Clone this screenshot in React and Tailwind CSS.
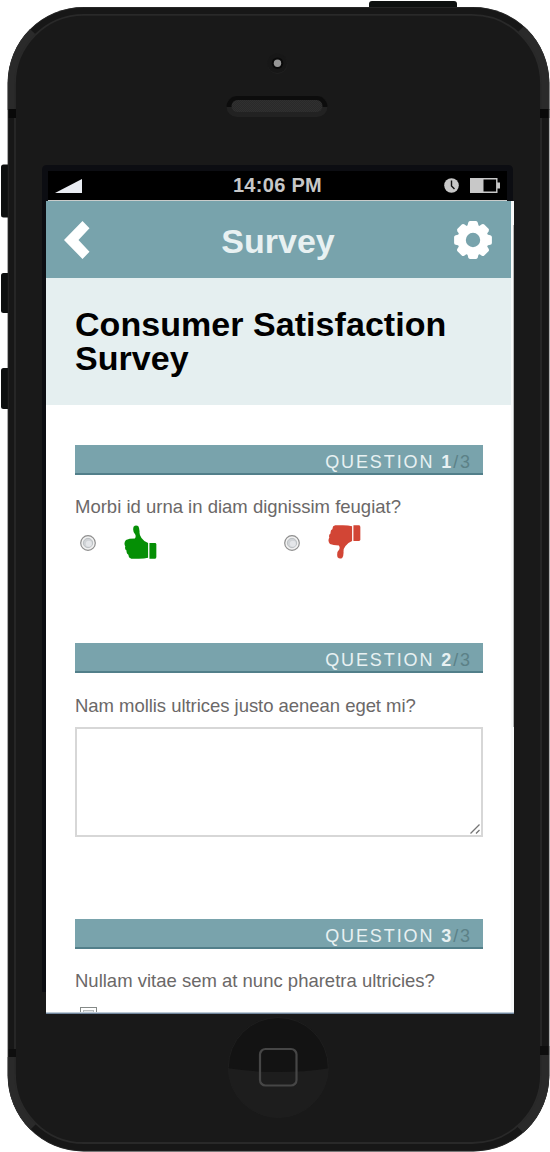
import React from "react";

function Device() {
  return (
    <svg className="absolute inset-0 h-full w-full" viewBox="0 0 550 1152" aria-hidden="true">
      <defs>
        <clipPath id="body">
          <rect x="7.7" y="7" width="541.6" height="1144.5" rx="76" />
        </clipPath>
        <clipPath id="home">
          <circle cx="278.300" cy="1067.500" r="50" />
        </clipPath>
        <pattern id="mesh" width="2" height="2" patternUnits="userSpaceOnUse">
          <rect width="2" height="2" fill="#292929" />
          <rect width="1" height="1" fill="#303030" />
          <rect x="1" y="1" width="1" height="1" fill="#303030" />
        </pattern>
      </defs>
      <rect x="369" y="1" width="88" height="14" rx="3" fill="#0e1110" />
      <rect x="1" y="164.500" width="14" height="53" rx="2.500" fill="#0d0f0f" />
      <rect x="1" y="273" width="14" height="40" rx="2.500" fill="#0d0f0f" />
      <rect x="1" y="368" width="14" height="41" rx="2.500" fill="#0d0f0f" />
      <g clipPath="url(#body)">
        <rect width="550" height="1152" fill="#171717" />
        <path d="M0 0L60 58V110H0zM550 0L488 62V110H550zM0 1057H60V1100L0 1160zM550 1055H488V1097L550 1160z" fill="#2a2a2a" />
        <rect x="15" y="14.800" width="526" height="1128.200" rx="69" fill="#191919" stroke="#292929" strokeWidth="1.800" />
        <path d="M8 109h8v9h-8zM540 109h10v9h-10z" fill="#090909" />
        <path d="M8 1049h8v8h-8zM540 1046h10v9h-10z" fill="#0e0e0e" />
        <rect x="8.100" y="7.400" width="540.800" height="1143.700" rx="75.600" fill="none" stroke="#303030" strokeWidth=".7" />
      </g>
      <circle cx="277.500" cy="64" r="10" fill="#202020" />
      <circle cx="277.200" cy="63.200" r="9.800" fill="#171717" />
      <circle cx="277.500" cy="63.200" r="5.800" fill="#0a0a0a" />
      <circle cx="277.500" cy="63.200" r="3.700" fill="#969696" />
      <rect x="226.500" y="96" width="101" height="21" rx="10.500" fill="#222" />
      <path d="M226.500 107a10.500 11 0 0 1 10.500-11h80a10.500 11 0 0 1 10.500 11z" fill="#0c0c0c" />
      <rect x="231.500" y="100" width="91" height="12" rx="6" fill="url(#mesh)" />
      <path d="M42 992V170q0-5 5-5H508q5 0 5 5V202H46V992z" fill="#0c0d12" />
      <g clipPath="url(#home)">
        <rect x="226" y="1015" width="104" height="105" fill="#1d1d1d" />
        <path d="M226 1015H330V1068Q278 1076 226 1068z" fill="#131313" />
      </g>
      <circle cx="278.300" cy="1067.500" r="50" fill="none" stroke="#1e1e1e" />
      <rect x="260" y="1049" width="36.500" height="36.500" rx="5.500" fill="none" stroke="#464646" strokeWidth="2.200" />
    </svg>
  );
}

function Gear() {
  return (
    <svg className="h-[38px] w-[38px]" viewBox="-19 -19 38 38" fill="white">
      <circle r="11.400" fill="none" stroke="white" strokeWidth="8.400" />
      {[0, 45, 90, 135, 180, 225, 270, 315].map((a) => (
        <path key={a} transform={`rotate(${a})`} d="M-5.600-14L-4.800-17.300Q-4.400-18.900-3-18.900H3Q4.400-18.900 4.800-17.300L5.600-14z" />
      ))}
    </svg>
  );
}

function Thumb({ className }) {
  return (
    <svg className={className} viewBox="0 0 100 100" fill="currentColor" preserveAspectRatio="none">
      <path d="M29 5Q35-1 43 3Q48 11 47 22Q47 31 53 38Q61 49 73 53V96Q62 99 45 99H22Q12 97 14 88Q6 84 8 76Q1 71 4 63Q-2 52 6 44Q15 40 33 40Q37 34 34 28Q25 20 29 5z" />
      <path d="M77 53H94Q98 53 98 57V94Q98 99 94 99H77z" />
    </svg>
  );
}

function Radio() {
  return (
    <svg className="mt-px h-4 w-4" viewBox="0 0 16 16">
      <circle cx="8" cy="8" r="7.300" fill="#f2f2f2" stroke="#8e8e8e" strokeWidth="1.200" />
      <circle cx="8" cy="8" r="4.700" fill="#d0d3d6" stroke="#b3b7bb" strokeWidth=".8" />
      <circle cx="8.800" cy="8.800" r="3" fill="#e4e6e9" />
    </svg>
  );
}

function QuestionBar({ number }) {
  return (
    <div className="flex h-[30px] items-center justify-end border-b-2 border-[#527f8a] bg-[#79a3ac] pr-[11px] pt-[6px] text-[18px] leading-none tracking-[1.9px] text-[#e8f1f2]">
      <span className="whitespace-pre">QUESTION </span>
      <span className="font-bold">{number}</span>
      <span className="text-[#5c8187]">/3</span>
    </div>
  );
}

export default function App() {
  return (
    <main
      className="relative h-[1152px] w-[550px] overflow-hidden bg-white pl-[46px] pt-[171px]"
      style={{ fontFamily: '"Liberation Sans", Arial, sans-serif' }}
    >
      <Device />
      <div className="relative flex h-[843px] w-[468px] flex-col overflow-hidden">
        <div className="ml-[2px] grid h-[30px] w-[459px] shrink-0 grid-cols-3 items-center border-b border-[#c9cccb] bg-black px-[7px] text-[#c8c8c8]">
          <svg className="h-[14px] w-[27px]" viewBox="0 0 27 14">
            <path d="M0 14L27 0V14z" fill="#e9ecf2" />
          </svg>
          <span className="whitespace-nowrap pb-[2px] text-center text-[20px] font-bold leading-none tracking-[0.3px]">14:06 PM</span>
          <span className="flex items-center justify-end gap-[11px]">
            <svg className="h-[15px] w-[15px]" viewBox="0 0 15 15">
              <circle cx="7.500" cy="7.500" r="7.300" fill="#c8c8c8" />
              <path d="M7.500 2.500V8L10.500 11" fill="none" stroke="#111" strokeWidth="1.400" />
            </svg>
            <svg className="h-[15px] w-[30px]" viewBox="0 0 30 15">
              <path d="M.7.700H26.800V14.300H.7z" fill="none" stroke="#c8c8c8" strokeWidth="1.400" />
              <path d="M0 0H13.500V15H0zM27 4.500H30V10.500H27z" fill="#c8c8c8" />
            </svg>
          </span>
        </div>

        <div className="flex min-h-0 flex-1 bg-white">
          <div className="w-[465px] shrink-0">
            <header className="flex h-[77px] items-center justify-between bg-[#78a3ac] pl-[18px] pr-[19px]">
              <svg className="h-[38px] w-[26px]" viewBox="0 0 26 38">
                <path d="M18.500 0L25.500 7.200L14.500 19L25.500 30.800L18.500 38L0 19z" fill="white" />
              </svg>
              <h1 className="pl-[12px] pt-[3px] text-[34px] font-bold leading-none text-[#e8f1f2]">Survey</h1>
              <Gear />
            </header>
            <section className="h-[127px] bg-[#e5eff0] pl-[29px] pt-[29px]">
              <h2 className="whitespace-nowrap text-[34px] font-bold leading-[34px] tracking-[0.05px] text-black">
                Consumer Satisfaction
                <br />
                Survey
              </h2>
            </section>

            <div className="ml-[29px] w-[408px] text-[18.500px] text-[#6b6868]">
              <section className="h-[198px] pt-[40px]">
                <QuestionBar number={1} />
                <p className="mt-[21px] whitespace-nowrap leading-[22px]">Morbi id urna in diam dignissim feugiat?</p>
                <div className="mt-[7px] grid grid-cols-2">
                  <div className="flex items-center pl-[5px]">
                    <Radio />
                    <Thumb className="ml-[28px] h-[34px] w-[33px] text-[#058f05]" />
                  </div>
                  <div className="flex items-center pl-[5px]">
                    <Radio />
                    <Thumb className="ml-[28px] h-[34px] w-[33px] -scale-y-100 text-[#d24535]" />
                  </div>
                </div>
              </section>
              <section className="h-[276px] pt-[40px]">
                <QuestionBar number={2} />
                <p className="mt-[22px] whitespace-nowrap leading-[22px] tracking-[-0.04px]">Nam mollis ultrices justo aenean eget mi?</p>
                <div className="mt-[10px] flex h-[110px] items-end justify-end border-2 border-[#d7d7d7] bg-white">
                  <svg className="h-[11px] w-[11px]" viewBox="0 0 11 11">
                    <path d="M.5 9.500L9.500.5M6 9.500L9.500 6" fill="none" stroke="#757575" strokeWidth="1.300" />
                  </svg>
                </div>
              </section>
              <section className="pt-[40px]">
                <QuestionBar number={3} />
                <p className="mt-[21px] whitespace-nowrap leading-[22px]">Nullam vitae sem at nunc pharetra ultricies?</p>
                <div className="ml-[5px] mt-[15px] h-[17px] w-[17px] border border-[#858a88] bg-white p-[2px]">
                  <div className="h-full border border-[#b9bdbd] bg-[#e5e7e8]" />
                </div>
              </section>
            </div>
          </div>
          <div className="flex-1 bg-[#f7f9f9] pl-[2px] pt-[24px]">
            <div className="h-[502px] bg-[#b7b9b9]" />
          </div>
        </div>
        <div className="h-[2px] shrink-0 border-b border-[#71869d] bg-[#bcc9d5]" />
      </div>
    </main>
  );
}
